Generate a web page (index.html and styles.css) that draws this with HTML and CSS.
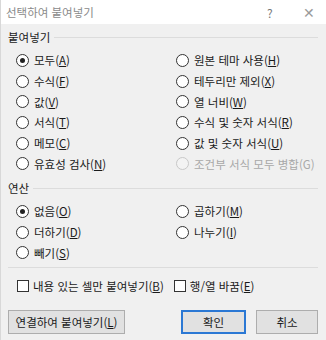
FILE: index.html
```html
<!DOCTYPE html>
<html lang="ko">
<head>
  <meta charset="UTF-8">
  <title>선택하여 붙여넣기</title>
  <link rel="stylesheet" href="styles.css">
</head>
<body>
  <div class="dialog">
    <div class="titlebar">
      <span class="title">선택하여 붙여넣기</span>
      <span class="help">?</span>
      <span class="close">✕</span>
    </div>

    <div class="content">
      <fieldset class="group">
        <div class="legend"><span>붙여넣기</span></div>
        <div class="grid">
          <label class="opt"><span class="radio on"></span>모두(<u>A</u>)</label>
          <label class="opt"><span class="radio"></span>원본 테마 사용(<u>H</u>)</label>
          <label class="opt"><span class="radio"></span>수식(<u>F</u>)</label>
          <label class="opt"><span class="radio"></span>테두리만 제외(<u>X</u>)</label>
          <label class="opt"><span class="radio"></span>값(<u>V</u>)</label>
          <label class="opt"><span class="radio"></span>열 너비(<u>W</u>)</label>
          <label class="opt"><span class="radio"></span>서식(<u>T</u>)</label>
          <label class="opt"><span class="radio"></span>수식 및 숫자 서식(<u>R</u>)</label>
          <label class="opt"><span class="radio"></span>메모(<u>C</u>)</label>
          <label class="opt"><span class="radio"></span>값 및 숫자 서식(<u>U</u>)</label>
          <label class="opt"><span class="radio"></span>유효성 검사(<u>N</u>)</label>
          <label class="opt disabled"><span class="radio"></span>조건부 서식 모두 병합(G)</label>
        </div>
      </fieldset>

      <fieldset class="group ops">
        <div class="legend"><span>연산</span></div>
        <div class="grid">
          <label class="opt"><span class="radio on"></span>없음(<u>O</u>)</label>
          <label class="opt"><span class="radio"></span>곱하기(<u>M</u>)</label>
          <label class="opt"><span class="radio"></span>더하기(<u>D</u>)</label>
          <label class="opt"><span class="radio"></span>나누기(<u>I</u>)</label>
          <label class="opt"><span class="radio"></span>빼기(<u>S</u>)</label>
        </div>
      </fieldset>

      <div class="sep"></div>

      <div class="checks">
        <label class="opt"><span class="check"></span>내용 있는 셀만 붙여넣기(<u>B</u>)</label>
        <label class="opt"><span class="check"></span>행/열 바꿈(<u>E</u>)</label>
      </div>

      <div class="buttons">
        <button class="btn link">연결하여 붙여넣기(<u>L</u>)</button>
        <span class="spacer"></span>
        <button class="btn ok">확인</button>
        <button class="btn cancel">취소</button>
      </div>
    </div>
  </div>
</body>
</html>
```

FILE: styles.css
```css
body {
  margin: 0;
  background: #f0f0f0;
  font-family: "Noto Sans CJK KR", "Noto Sans", sans-serif;
  font-size: 11.5px;
  color: #1a1a1a;
}
.dialog {
  width: 326px;
  height: 340px;
  background: #f0f0f0;
  border-left: 1px solid #d8d8d8;
  box-sizing: border-box;
}
.titlebar {
  height: 24px;
  background: #fff;
  display: flex;
  align-items: center;
  padding-left: 5px;
  color: #8a8a8a;
}
.title {
  flex: 1;
  font-size: 11.5px;
}
.help {
  width: 14px;
  margin-right: 22px;
  font-size: 12px;
  color: #777;
}
.close {
  width: 14px;
  margin-right: 9px;
  font-size: 14px;
  font-weight: 300;
  color: #9a9a9a;
}
.content {
  padding: 4px 7px 0 7px;
}
.group {
  border: none;
  margin: 0;
  padding: 0;
}
.legend {
  display: flex;
  align-items: center;
  height: 18px;
  margin-bottom: 4px;
}
.legend::after {
  content: "";
  flex: 1;
  height: 1px;
  background: #dcdcdc;
  margin-left: 4px;
  margin-right: 1px;
}
.grid {
  display: grid;
  grid-template-columns: 160px 1fr;
  grid-auto-rows: 20.7px;
  padding-left: 8px;
}
.ops {
  margin-top: 5px;
}
.opt {
  display: flex;
  align-items: center;
  white-space: nowrap;
}
.opt u {
  text-underline-offset: 1px;
}
.disabled {
  color: #a8a8a8;
}
.radio {
  width: 11px;
  height: 11px;
  border: 1px solid #333;
  border-radius: 50%;
  background: #fff;
  margin-right: 5px;
  position: relative;
  flex: none;
}
.radio.on::after {
  content: "";
  position: absolute;
  left: 3px;
  top: 3px;
  width: 5px;
  height: 5px;
  border-radius: 50%;
  background: #222;
}
.disabled .radio {
  border-color: #c8c8c8;
  background: #f3f3f3;
}
.sep {
  height: 1px;
  background: #dcdcdc;
  margin: 4px 1px 0 0;
}
.checks {
  display: flex;
  gap: 10px;
  padding-left: 9px;
  height: 31px;
  align-items: center;
  margin-top: 2px;
}
.check {
  width: 10px;
  height: 10px;
  border: 1px solid #333;
  background: #fff;
  margin-right: 4px;
  flex: none;
}
.buttons {
  display: flex;
  margin-top: 9px;
}
.spacer {
  flex: 1;
}
.btn {
  height: 24px;
  font-family: inherit;
  font-size: 11.5px;
  color: #1a1a1a;
  background: #e1e1e1;
  border: 1px solid #adadad;
  padding: 0;
}
.link {
  width: 117px;
}
.ok {
  width: 65px;
  border: 2px solid #2b78d4;
  margin-right: 10px;
}
.cancel {
  width: 62px;
  margin-right: 1px;
}
```
